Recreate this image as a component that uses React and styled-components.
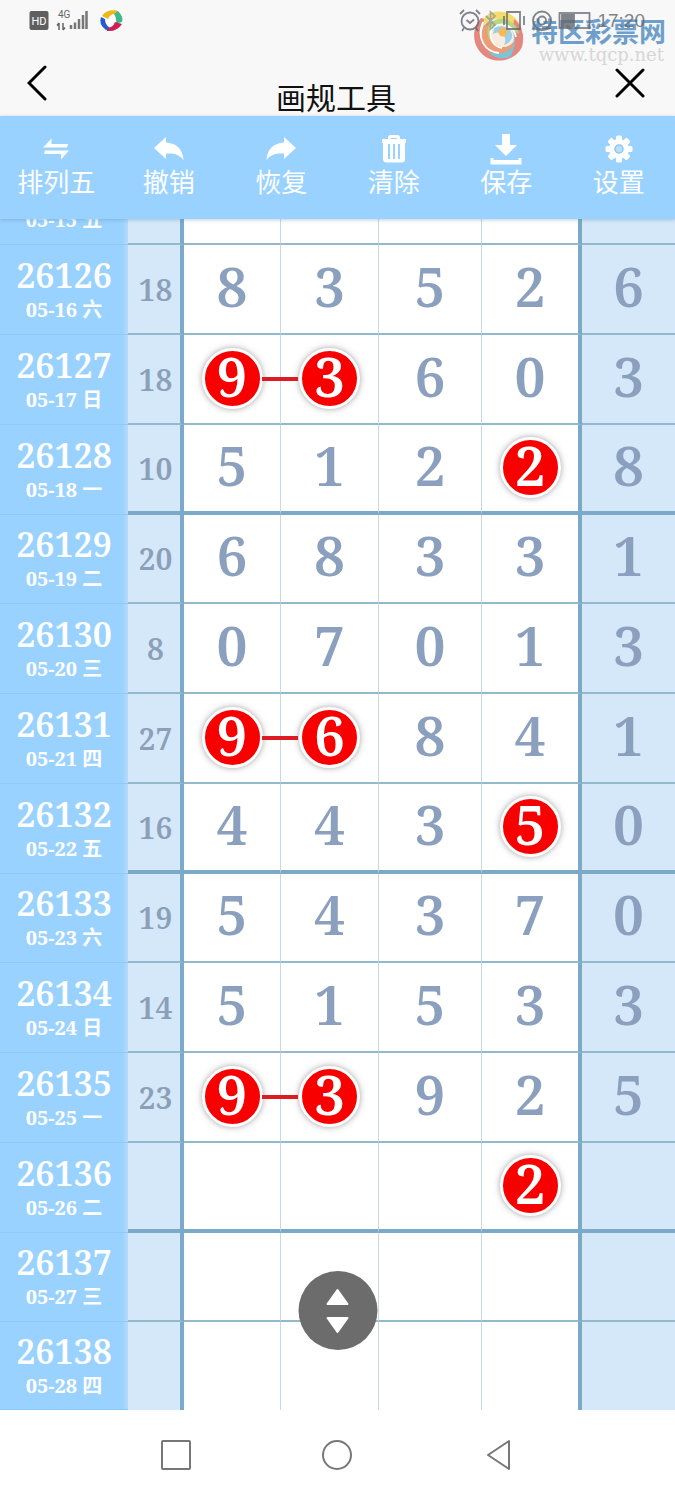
import React, { useState } from 'react';
import styled, { createGlobalStyle } from 'styled-components';

const rows = [
    { period: '26125', date: '05-15 五', sum: '', nums: ['', '', '', '', ''] },
    { period: '26126', date: '05-16 六', sum: 18, nums: [8, 3, 5, 2, 6] },
    { period: '26127', date: '05-17 日', sum: 18, nums: [9, 3, 6, 0, 3], marks: [0, 1] },
    { period: '26128', date: '05-18 一', sum: 10, nums: [5, 1, 2, 2, 8], marks: [3], last: true },
    { period: '26129', date: '05-19 二', sum: 20, nums: [6, 8, 3, 3, 1], first: true },
    { period: '26130', date: '05-20 三', sum: 8, nums: [0, 7, 0, 1, 3] },
    { period: '26131', date: '05-21 四', sum: 27, nums: [9, 6, 8, 4, 1], marks: [0, 1] },
    { period: '26132', date: '05-22 五', sum: 16, nums: [4, 4, 3, 5, 0], marks: [3], last: true },
    { period: '26133', date: '05-23 六', sum: 19, nums: [5, 4, 3, 7, 0], first: true },
    { period: '26134', date: '05-24 日', sum: 14, nums: [5, 1, 5, 3, 3] },
    { period: '26135', date: '05-25 一', sum: 23, nums: [9, 3, 9, 2, 5], marks: [0, 1] },
    { period: '26136', date: '05-26 二', sum: '', nums: ['', '', '', 2, ''], marks: [3], last: true },
    { period: '26137', date: '05-27 三', sum: '', nums: ['', '', '', '', ''], first: true },
    { period: '26138', date: '05-28 四', sum: '', nums: ['', '', '', '', ''], end: true },
];

const SwapIcon = () => (
    <svg width="26" height="22" viewBox="0 0 26 22" fill="#fff">
        <path d="M0 9.5 8.5.5V6H25l-1 3.5zM26 12.5 18 21.5V16H1l1-3.5z" />
    </svg>
);

const UndoIcon = () => (
    <svg width="30" height="24" viewBox="0 0 30 24" fill="#fff">
        <path d="M0 11 12 0v5.5C22 6 29 12 29.5 23 25.500 17.500 20 16 12 16.500V22z" />
    </svg>
);

const RedoIcon = () => (
    <svg width="30" height="24" viewBox="0 0 30 24" fill="#fff">
        <path d="M30 11 18 0v5.500C8 6 1 12 .5 23 4.500 17.500 10 16 18 16.500V22z" />
    </svg>
);

const TrashIcon = () => (
    <svg width="26" height="28" viewBox="0 0 26 28">
        <path d="M8.500 4V2.500Q8.500 1.500 9.500 1.500h7q1 0 1 1V4" fill="none" stroke="#fff" strokeWidth="3" />
        <path d="M1 4h24v4H1zM2 8h22v16q0 3.500-3.500 3.500h-15Q2 27.500 2 24z" fill="#fff" />
        <path d="M8 9v15M13 9v15M18 9v15" stroke="#99d2ff" strokeWidth="2" />
    </svg>
);

const SaveIcon = () => (
    <svg width="32" height="31" viewBox="0 0 32 31" fill="#fff">
        <path d="M12 0h8v11h7L16 22 5 11h7zM.500 24h3v2h25v-2h3v6.500H.500z" />
    </svg>
);

const GearIcon = () => (
    <svg width="28" height="28" viewBox="0 0 28 28">
        <g fill="#fff">
            {[0, 45, 90, 135].map(a => (
                <rect key={a} x="11" y="0.500" width="6" height="27" rx="1.500" transform={`rotate(${a} 14 14)`} />
            ))}
            <circle cx="14" cy="14" r="10" />
        </g>
        <circle cx="14" cy="14" r="4" fill="#b8dffc" stroke="#8cc6f5" strokeWidth="1.500" />
    </svg>
);

const tools = [
    { name: '排列五', Icon: SwapIcon },
    { name: '撤销', Icon: UndoIcon },
    { name: '恢复', Icon: RedoIcon },
    { name: '清除', Icon: TrashIcon },
    { name: '保存', Icon: SaveIcon },
    { name: '设置', Icon: GearIcon },
];

const SignalIcons = () => (
    <svg width="94" height="26" viewBox="0 0 94 26" aria-hidden="true">
        <rect x="0.500" y="3" width="19" height="19" rx="2" fill="#5f5f5f" />
        <text x="10" y="17" fontSize="11" textAnchor="middle" fill="#fff" fontFamily="Roboto, sans-serif">HD</text>
        <text x="29" y="10" fontSize="10" fill="#666" fontFamily="Roboto, sans-serif">4G</text>
        <path d="M30 22v-7m-2 2.500 2-2.500M34 15v7m2-2.500-2 2.500" stroke="#666" strokeWidth="1.500" fill="none" />
        <path d="M42 21v-4M46 21v-6.500M50 21v-10M54 21V7M57.500 21V3" stroke="#777" strokeWidth="2.500" />
        <circle cx="82" cy="12" r="12" fill="#fff" />
        <path d="M73 8Q77 1 88 2.500L91 7Q82 4 79 11z" fill="#f2b51c" />
        <path d="M89 3Q95 9 93 14L87 16Q88 10 85 6z" fill="#3fb98c" />
        <path d="M93 16Q88 24 78 23L77 20Q84 20 86 14z" fill="#cf1f52" />
        <path d="M77 22Q69 16 72 9L76 11Q76 17 81 20z" fill="#245bd3" />
    </svg>
);

const DeviceIcons = () => (
    <svg width="132" height="26" viewBox="0 0 132 26" fill="none" stroke="#626870" strokeWidth="1.800" aria-hidden="true">
        <circle cx="11" cy="13" r="8.500" />
        <path d="m7.500 12 3.500 3 4-3.500M1 6l4-4M21 6l-4-4M5 20l-2 3M17 20l2 3" />
        <path d="m27 8 9 9-4.500 4V4L36 8l-9 9" stroke="#98a08c" />
        <path d="M48 4h13v17H48zM45 8v9M65 8v9" />
        <circle cx="83" cy="12.500" r="9" />
        <circle cx="83" cy="12.500" r="4" />
        <path d="M74 20q9 4 18 0" />
        <rect x="100.500" y="5" width="30" height="15" />
        <path d="M103 7h12v11h-12z" fill="#626870" />
    </svg>
);

const SwirlLogo = () => (
    <svg width="52" height="52" viewBox="0 0 52 52" fill="none" aria-hidden="true">
        <circle cx="26" cy="26" r="24" fill="#f9ead9" />
        <path d="M8 8C-4 21 0 42 17 49c14 5 28-2 32-15-8 11-20 14-29 8C8 34 4 21 12 9z" fill="#df6b62" />
        <path d="M12 7C20-1 36 0 43 9c5 5 7 12 6 20C45 18 38 11 28 9c-8-1-13 1-18 7z" fill="#f3d64a" />
        <path d="M50 24c1 12-7 22-17 24-8 1-13-1-18-6 13 4 25-2 26-13 0-6-2-10-6-13 7 0 12 3 15 8z" fill="#63b7cf" />
        <path d="M41 9c8 6 11 17 8 28-3 6-7 9-12 11 5-9 7-19 3-28z" fill="#df6b62" />
        <path d="M11 15C5 28 12 41 24 43c9 1 16-4 18-13-5 7-12 9-18 5C15 30 14 20 21 11z" fill="#e88755" />
        <path d="M22 10c10-4 22 3 24 14l-5-3C36 15 28 13 21 17c-5 4-5 10-3 15-6-9-4-18 4-22z" fill="#a7cf67" />
        <path d="M21 18c7-4 16-1 18 6 1 5-3 10-8 11 2-4 2-8-2-11-3-2-6-2-9 0z" fill="#82c9e4" />
        <path d="M10 12C3 28 12 42 26 43M19 16c-4 11 0 20 10 22M21 17c8-6 20-1 22 10" stroke="#fff" strokeWidth="1.800" />
        <circle cx="30" cy="22" r="4.500" fill="#f5a935" />
    </svg>
);

const App = () => {
    const [tool, setTool] = useState('');

    return (
        <Page>
            <GlobalStyle />
            <Header>
                <StatusBar>
                    <SignalIcons />
                    <StatusRight>
                        <DeviceIcons />
                        <Clock>17:20</Clock>
                    </StatusRight>
                </StatusBar>
                <Watermark>
                    <SwirlLogo />
                    <div>
                        <MarkName>特区彩票网</MarkName>
                        <MarkSite>www.tqcp.net</MarkSite>
                    </div>
                </Watermark>
                <TitleBar>
                    <IconButton aria-label="返回">
                        <svg width="22" height="36" viewBox="0 0 22 36" fill="none" stroke="#000" strokeWidth="3" strokeLinecap="round">
                            <path d="M18 2 2 18l16 16" />
                        </svg>
                    </IconButton>
                    <Title>画规工具</Title>
                    <IconButton aria-label="关闭">
                        <svg width="30" height="30" viewBox="0 0 30 30" stroke="#000" strokeWidth="3" strokeLinecap="round">
                            <path d="m2 2 26 26M28 2 2 28" />
                        </svg>
                    </IconButton>
                </TitleBar>
            </Header>

            <Toolbar>
                {tools.map(({ name, Icon }) => (
                    <ToolButton key={name} onClick={() => setTool(name)} aria-pressed={tool === name}>
                        <ToolIcon><Icon /></ToolIcon>
                        {name}
                    </ToolButton>
                ))}
            </Toolbar>

            <Board>
                <Table>
                    <colgroup>
                        <Col $w={128} />
                        <Col $w={56} />
                        <Col $w={97} />
                        <Col $w={98} />
                        <Col $w={103} />
                        <Col $w={100} />
                        <Col $w={93} />
                    </colgroup>
                    <tbody>
                        {rows.map(({ period, date, sum, nums, marks = [], first, last, end }) => (
                            <Row key={period} $first={first} $last={last} $end={end}>
                                <PeriodCell scope="row">
                                    <Period>{period}</Period>
                                    <DateText>{date}</DateText>
                                </PeriodCell>
                                <SumCell>{sum}</SumCell>
                                {nums.map((num, i) => (
                                    <NumCell key={i} $side={i === 4} $edge={i === 3}>
                                        {marks.includes(i)
                                            ? <Ball $linked={marks.includes(i + 1)}>{num}</Ball>
                                            : <Digit>{num}</Digit>}
                                    </NumCell>
                                ))}
                            </Row>
                        ))}
                    </tbody>
                </Table>
                <ScrollButton aria-label="滚动">
                    <svg width="26" height="46" viewBox="0 0 26 46" fill="#fff" stroke="#fff" strokeWidth="2" strokeLinejoin="round">
                        <path d="M13 2 23 16H3zM13 44 3 30h20z" />
                    </svg>
                </ScrollButton>
            </Board>

            <NavBar>
                <IconButton aria-label="最近任务">
                    <svg width="32" height="32" viewBox="0 0 32 32" fill="none" stroke="#777" strokeWidth="2">
                        <rect x="2" y="2" width="28" height="28" rx="1" />
                    </svg>
                </IconButton>
                <IconButton aria-label="主屏幕">
                    <svg width="32" height="32" viewBox="0 0 32 32" fill="none" stroke="#777" strokeWidth="2">
                        <circle cx="16" cy="16" r="14" />
                    </svg>
                </IconButton>
                <IconButton aria-label="后退">
                    <svg width="32" height="32" viewBox="0 0 32 32" fill="none" stroke="#777" strokeWidth="2" strokeLinejoin="round">
                        <path d="M5 16 26 2v28z" />
                    </svg>
                </IconButton>
            </NavBar>
        </Page>
    );
};

const GlobalStyle = createGlobalStyle`
  * { box-sizing: border-box; }

  body {
    margin: 0;
    background: #fff;
    font-family: "Liberation Sans", "Noto Sans CJK SC", sans-serif;
  }

  svg { display: block; flex: none; }
`;

const Page = styled.div`
  display: flex;
  flex-direction: column;
  height: 100vh;
`;

const Header = styled.header`
  position: relative;
  background: #f8f8f8;
`;

const StatusBar = styled.div`
  display: flex;
  justify-content: space-between;
  align-items: flex-end;
  height: 36px;
  padding: 0 30px 2px 29px;
`;

const StatusRight = styled.div`
  position: relative;
  z-index: 1;
  display: flex;
  align-items: center;
  gap: 6px;
  opacity: 0.8;
`;

const Clock = styled.span`
  color: #626870;
  font-size: 19px;
  line-height: 26px;
`;

const Watermark = styled.div`
  position: absolute;
  top: 10px;
  right: 9px;
  display: flex;
  gap: 6px;
  opacity: 0.8;
  pointer-events: none;
`;

const MarkName = styled.div`
  margin-top: 4px;
  color: #4c8ac0;
  font: bold 27px/34px "Noto Sans CJK SC", sans-serif;
`;

const MarkSite = styled.div`
  padding-right: 2px;
  color: #cfcfcf;
  font: 18px/14px "DejaVu Serif", serif;
  text-align: right;
`;

const TitleBar = styled.div`
  display: grid;
  grid-template-columns: 1fr auto 1fr;
  height: 80px;
  padding: 29px 30px 0 27px;
`;

const Title = styled.h1`
  margin: 0;
  padding-top: 9px;
  color: #111;
  font: 30px/44px "Noto Sans CJK SC", sans-serif;
`;

const IconButton = styled.button`
  display: flex;
  justify-content: center;
  align-items: center;
  height: 36px;
  padding: 0;
  border: none;
  background: transparent;
  cursor: pointer;

  ${TitleBar} &:first-child { justify-self: start; }
  ${TitleBar} &:last-child { justify-self: end; }
`;

const Toolbar = styled.div`
  position: relative;
  z-index: 1;
  display: grid;
  grid-template-columns: repeat(6, 1fr);
  flex: none;
  height: 103px;
  padding-top: 14px;
  background: #99d2ff;
  box-shadow: 0 1px 4px rgba(90, 130, 170, 0.4);
`;

const ToolButton = styled.button`
  display: flex;
  flex-direction: column;
  align-items: center;
  padding: 0;
  border: none;
  background: transparent;
  color: #fff;
  font: 26px/26px "Noto Sans CJK SC", sans-serif;
  cursor: pointer;
`;

const ToolIcon = styled.span`
  display: flex;
  align-items: center;
  height: 38px;
`;

const Board = styled.main`
  position: relative;
  display: flex;
  align-items: flex-end;
  flex: 1;
  min-height: 0;
  overflow: hidden;
`;

const Table = styled.table`
  width: 100%;
  table-layout: fixed;
  border-collapse: separate;
  border-spacing: 0;
  font-family: "Noto Serif", "Liberation Serif", "Noto Sans CJK SC", serif;
  font-weight: 600;
  text-align: center;
`;

const Col = styled.col`
  width: ${p => p.$w}px;
`;

const Row = styled.tr`
  height: ${p => (p.$end ? 88 : p.$first ? 89 : 90)}px;

  td {
    border-bottom: ${p => (p.$end ? 'none' : p.$last ? '4px solid #7aaac8' : '2px solid #93b9cd')};
  }
`;

const PeriodCell = styled.th`
  padding: 1px 0 0;
  border-bottom: 1px solid #8ec8f5;
  background: linear-gradient(to left, #b4dbfa, #99d2ff 6px);
  color: #fff;
`;

const Period = styled.div`
  font-size: 34px;
  font-weight: 600;
  line-height: 38px;
`;

const DateText = styled.div`
  font-size: 20px;
  line-height: 31px;
`;

const SumCell = styled.td`
  padding: 0 0 0 3px;
  border-right: 4px solid #7aaac8;
  background: #d5e8fa;
  color: #8ba0b8;
  font-size: 30px;
`;

const NumCell = styled.td`
  position: relative;
  padding: 0 0 2px;
  border-right: ${p => (p.$side ? 'none' : p.$edge ? '4px solid #7aaac8' : '1px solid #cbd8e2')};
  background: ${p => (p.$side ? '#d5e8fa' : '#fff')};
`;

const Digit = styled.div`
  height: 61px;
  margin: 0 auto;
  color: #8ba0be;
  font-size: 55px;
  line-height: 55px;
`;

const Ball = styled(Digit)`
  width: 61px;
  border: 3px solid #fff;
  border-radius: 50%;
  background: #f80000;
  box-shadow: 0 0 6px rgba(70, 70, 70, 0.5);
  color: #fff;
  line-height: 49px;

  &::after {
    content: ${p => (p.$linked ? '""' : 'none')};
    position: absolute;
    z-index: 1;
    top: 50%;
    left: calc(50% + 30px);
    width: calc(100% - 60px);
    height: 4px;
    margin-top: -2px;
    background: #dc1b22;
  }
`;

const ScrollButton = styled.button`
  position: absolute;
  bottom: 60px;
  left: 50%;
  display: flex;
  justify-content: center;
  align-items: center;
  width: 79px;
  height: 79px;
  padding: 0;
  border: none;
  border-radius: 50%;
  background: #6c6c6c;
  transform: translateX(-50%);
  cursor: pointer;
`;

const NavBar = styled.nav`
  display: grid;
  grid-template-columns: repeat(3, 1fr);
  align-items: center;
  flex: none;
  height: 90px;
  padding: 0 95px;
  background: #fff;
`;

export default App;
